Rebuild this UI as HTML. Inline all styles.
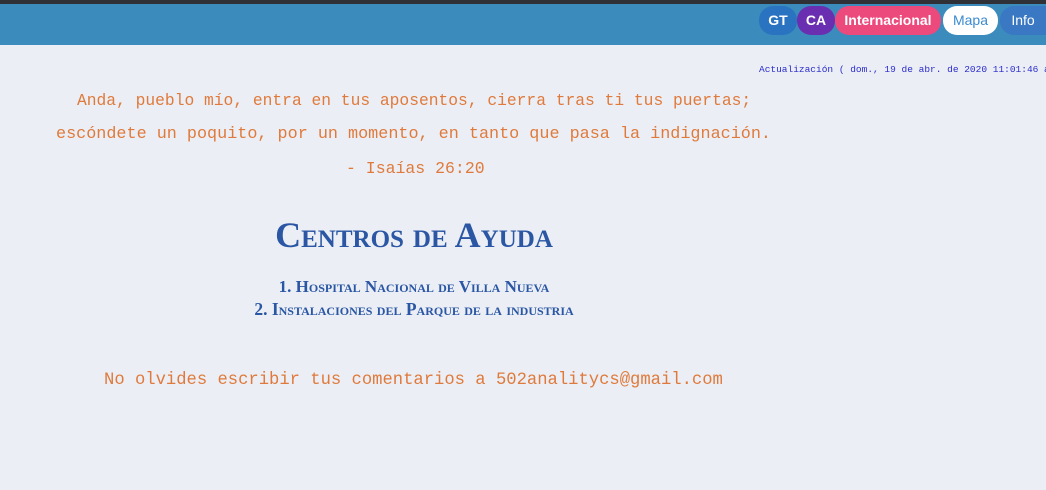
<!DOCTYPE html>
<html><head><style>
body{margin:0;width:1046px;height:490px;background:#ebeff5;overflow:hidden;position:relative;font-family:"Liberation Sans",sans-serif}
.top{position:absolute;left:0;top:0;width:1046px;height:4px;background:#2f3136}
.hdr{position:absolute;left:0;top:4px;width:1046px;height:41px;background:#3b8bbd}
.b{position:absolute;top:2px;height:29px;border-radius:14px;color:#fff;font-size:14px;font-weight:bold;line-height:29px;text-align:center}
.upd{position:absolute;left:759px;top:64px;font-family:"Liberation Mono",monospace;font-size:9.5px;color:#2b2bcc;white-space:nowrap}
.q{position:absolute;font-family:"Liberation Mono",monospace;color:#e07a3c;font-size:17px;white-space:nowrap}
.t{position:absolute;font-family:"Liberation Serif",serif;color:#2a56a4;font-weight:bold;font-variant:small-caps;white-space:nowrap;text-align:center}
</style></head><body>
<div class="top"></div>
<div class="hdr">
<div class="b" style="left:759px;width:38px;background:#2a73c0">GT</div>
<div class="b" style="left:797px;width:38px;background:#6a2fb0">CA</div>
<div class="b" style="left:835px;width:106px;background:#ec4a7d">Internacional</div>
<div class="b" style="left:943px;width:55px;background:#fff;color:#3b8bd0;font-weight:normal">Mapa</div>
<div class="b" style="left:1000px;width:46px;background:#3a78c3;font-weight:normal;border-radius:14px 0 0 14px">Info</div>
</div>
<div class="upd">Actualización ( dom., 19 de abr. de 2020 11:01:46 a.</div>
<div class="q" style="left:77px;top:91px;font-size:16.3px">Anda, pueblo mío, entra en tus aposentos, cierra tras ti tus puertas;</div>
<div class="q" style="left:56px;top:125px;font-size:16.8px">escóndete un poquito, por un momento, en tanto que pasa la indignación.</div>
<div class="q" style="left:346px;top:159px;font-size:16.5px">- Isaías 26:20</div>
<div class="t" style="left:214px;width:400px;top:214px;font-size:36px">Centros de Ayuda</div>
<div class="t" style="left:214px;width:400px;top:277px;font-size:17px">1. Hospital Nacional de Villa Nueva</div>
<div class="t" style="left:164px;width:500px;top:299px;font-size:17.5px">2. Instalaciones del Parque de la industria</div>
<div class="q" style="left:104px;top:371px;font-size:17.2px">No olvides escribir tus comentarios a 502analitycs@gmail.com</div>
</body></html>
